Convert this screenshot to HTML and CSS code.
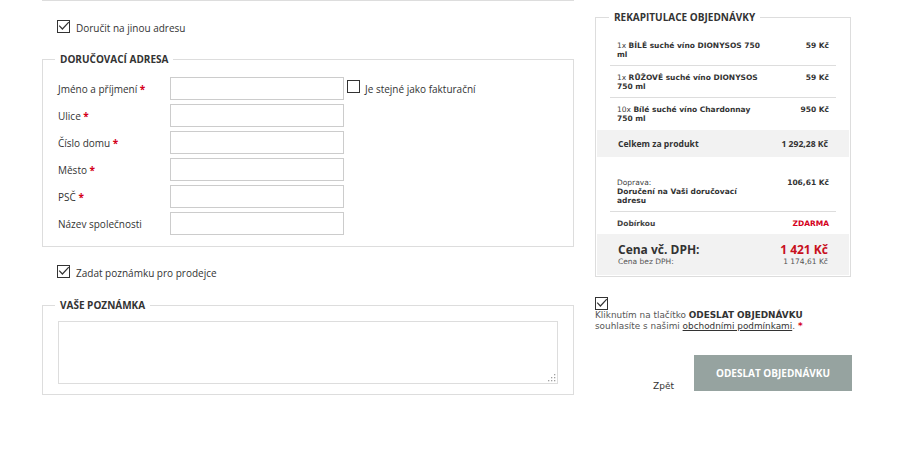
FILE: index.html
```html
<!DOCTYPE html>
<html lang="cs">
<head>
<meta charset="utf-8">
<title>Objednávka</title>
<link rel="stylesheet" href="styles.css">
</head>
<body>
<div class="page">
  <div class="left">
    <label class="check-row first-check">
      <span class="cb checked"><svg viewBox="0 0 13 13" width="13" height="13"><path d="M2.2 5.6 L5.4 9 L11.8 2.2" fill="none" stroke="#333" stroke-width="1.2"/></svg></span>
      <span class="check-text">Doručit na jinou adresu</span>
    </label>

    <fieldset class="box address">
      <legend>DORUČOVACÍ ADRESA</legend>
      <div class="row"><span class="lbl">Jméno a příjmení <b class="req">*</b></span><span class="inp"></span>
        <label class="same"><span class="cb"></span><span class="check-text">Je stejné jako fakturační</span></label></div>
      <div class="row"><span class="lbl">Ulice <b class="req">*</b></span><span class="inp"></span></div>
      <div class="row"><span class="lbl">Číslo domu <b class="req">*</b></span><span class="inp"></span></div>
      <div class="row"><span class="lbl">Město <b class="req">*</b></span><span class="inp"></span></div>
      <div class="row"><span class="lbl">PSČ <b class="req">*</b></span><span class="inp"></span></div>
      <div class="row"><span class="lbl">Název společnosti</span><span class="inp"></span></div>
    </fieldset>

    <label class="check-row second-check">
      <span class="cb checked"><svg viewBox="0 0 13 13" width="13" height="13"><path d="M2.2 5.6 L5.4 9 L11.8 2.2" fill="none" stroke="#333" stroke-width="1.2"/></svg></span>
      <span class="check-text">Zadat poznámku pro prodejce</span>
    </label>

    <fieldset class="box note">
      <legend>VAŠE POZNÁMKA</legend>
      <div class="note-wrap">
        <textarea class="note-area"></textarea>
        <svg class="grip" viewBox="0 0 9 9" width="9" height="9"><g fill="#a0a0a0"><rect x="7" y="1" width="1.3" height="1.3"/><rect x="4" y="4" width="1.3" height="1.3"/><rect x="7" y="4" width="1.3" height="1.3"/><rect x="1" y="7" width="1.3" height="1.3"/><rect x="4" y="7" width="1.3" height="1.3"/><rect x="7" y="7" width="1.3" height="1.3"/></g></svg>
      </div>
    </fieldset>
  </div>

  <div class="right">
    <fieldset class="recap">
      <legend>REKAPITULACE OBJEDNÁVKY</legend>
      <div class="items">
        <div class="item"><span class="name">1x <b>BÍLÉ suché víno DIONYSOS 750 ml</b></span><b class="price">59 Kč</b></div>
        <div class="item"><span class="name">1x <b>RŮŽOVÉ suché víno DIONYSOS 750 ml</b></span><b class="price">59 Kč</b></div>
        <div class="item last"><span class="name">10x <b>Bílé suché víno Chardonnay 750 ml</b></span><b class="price">950 Kč</b></div>
      </div>
      <div class="band sum">
        <span>Celkem za produkt</span><span>1 292,28 Kč</span>
      </div>
      <div class="items items2">
        <div class="item"><span class="name">Doprava:<br><b>Doručení na Vaši doručovací adresu</b></span><b class="price">106,61 Kč</b></div>
        <div class="item last pay"><b class="name">Dobírkou</b><b class="price red">ZDARMA</b></div>
      </div>
      <div class="band total">
        <div class="total-row"><span class="total-lbl">Cena vč. DPH:</span><span class="total-val">1 421 Kč</span></div>
        <div class="sub-row"><span>Cena bez DPH:</span><span>1 174,61 Kč</span></div>
      </div>
    </fieldset>

    <div class="agree">
      <span class="cb checked"><svg viewBox="0 0 13 13" width="13" height="13"><path d="M2.2 5.6 L5.4 9 L11.8 2.2" fill="none" stroke="#333" stroke-width="1.2"/></svg></span>
      <p class="agree-text">Kliknutím na tlačítko <b>ODESLAT OBJEDNÁVKU</b><br>souhlasíte s našimi <a href="#">obchodními podmínkami</a>. <b class="req">*</b></p>
    </div>

    <div class="actions">
      <a class="back" href="#">Zpět</a>
      <button class="submit" type="button">ODESLAT OBJEDNÁVKU</button>
    </div>
  </div>
</div>
</body>
</html>
```
FILE: styles.css
```css
* { box-sizing: border-box; }
html, body { margin: 0; padding: 0; background: #fff; }
body { font-family: "Open Sans", "DejaVu Sans", sans-serif; color: #333; }

.page {
  display: flex;
  align-items: flex-start;
  padding-left: 42px;
  gap: 21px;
}

.left {
  width: 532px;
  border-top: 1px solid #ddd;
}

.cb {
  display: inline-block;
  flex: none;
  width: 13px;
  height: 13px;
  border: 1px solid #333;
  position: relative;
  background: #fff;
}
.cb svg {
  position: absolute;
  left: -1px;
  top: -1px;
}

.check-row {
  display: flex;
  align-items: flex-start;
  gap: 6px;
  padding-left: 15px;
  height: 13px;
}
.first-check { margin-top: 19px; }
.second-check { margin-top: 18px; }

.check-text {
  font-size: 10px;
  line-height: 13px;
  color: #333;
  padding-top: 2px;
}

.box {
  margin: 0;
  min-width: 0;
  border: 1px solid #ddd;
  padding: 11px 15px 11px;
}
.box legend, .recap legend {
  font-weight: 700;
  font-size: 10px;
  line-height: 14px;
  color: #333;
  padding: 0 5px;
  margin-left: -3px;
}
.address { margin-top: 19px; }
.note { margin-top: 20px; padding-top: 9px; padding-bottom: 10px; }

.row {
  display: flex;
  align-items: center;
  height: 23px;
  margin-bottom: 4px;
}
.row:last-child { margin-bottom: 0; }
.lbl {
  width: 112px;
  font-size: 10px;
  color: #333;
}
.req { color: #d4001a; font-weight: 700; }
.inp {
  width: 174px;
  height: 23px;
  border: 1px solid #ccc;
  background: #fff;
}
.same {
  display: flex;
  align-items: flex-start;
  align-self: flex-start;
  gap: 5px;
  margin-left: 3px;
  margin-top: 3px;
}
.same .check-text { padding-top: 3px; }

.note-wrap { position: relative; width: 500px; }
.note-area {
  display: block;
  width: 500px;
  height: 63px;
  border: 1px solid #ddd;
  margin: 0;
  padding: 4px;
  resize: none;
  font-family: "Open Sans", sans-serif;
}
.grip {
  position: absolute;
  right: 2px;
  bottom: 2px;
}

/* right */
.right {
  width: 256px;
  margin-top: 10px;
}
.recap {
  margin: 0;
  min-width: 0;
  border: 1px solid #ddd;
  padding: 0 1px 1px;
}
.recap legend { margin-left: 12px; }

.items {
  margin: 0 13px;
  padding-top: 10px;
  font-family: "DejaVu Sans", Verdana, sans-serif;
  font-size: 7.5px;
  line-height: 9px;
  color: #333;
}
.item {
  display: flex;
  justify-content: space-between;
  align-items: flex-start;
  padding: 7px 7px 6px;
  border-bottom: 1px solid #ddd;
}
.item.last { border-bottom: 0; padding-bottom: 7px; }
.name { width: 146px; color: #444; }
.name b { color: #333; }
.price { text-align: right; color: #333; }
.red { color: #d4001a; }

.band {
  background: #f2f2f2;
  padding: 0 21px;
}
.sum {
  display: flex;
  justify-content: space-between;
  align-items: center;
  height: 27px;
  font-weight: 700;
  font-size: 8.6px;
  color: #333;
}
.items2 { padding-top: 14px; }
.items2 .item.last { padding-top: 7px; padding-bottom: 6px; }
.pay .name { color: #444; }

.total { padding-top: 8px; padding-bottom: 9px; }
.total-row {
  display: flex;
  justify-content: space-between;
  font-weight: 700;
  font-size: 12px;
  line-height: 15px;
}
.total-lbl { color: #333; }
.total-val { color: #c8101c; }
.sub-row {
  display: flex;
  justify-content: space-between;
  font-family: "DejaVu Sans", Verdana, sans-serif;
  font-size: 7.5px;
  line-height: 9px;
  color: #555;
}

.agree { margin-top: 20px; }
.agree .cb { display: block; }
.agree-text {
  margin: 0;
  font-family: "DejaVu Sans", Verdana, sans-serif;
  font-size: 8.9px;
  line-height: 11px;
  color: #555;
}
.agree-text b { color: #333; }
.agree-text a { color: #333; text-decoration: underline; }
.agree-text .req { color: #d4001a; }

.actions {
  display: flex;
  justify-content: flex-end;
  align-items: flex-start;
  gap: 20px;
  margin-top: 23px;
}
.back {
  font-family: "DejaVu Sans", Verdana, sans-serif;
  font-size: 9px;
  line-height: 11px;
  color: #333;
  text-decoration: none;
  margin-top: 26px;
}
.submit {
  width: 158px;
  height: 36px;
  border: 0;
  background: #96a3a0;
  color: #fff;
  font-family: "Open Sans", sans-serif;
  font-weight: 700;
  font-size: 10px;
  padding: 0;
  margin-right: -1px;
}
```
